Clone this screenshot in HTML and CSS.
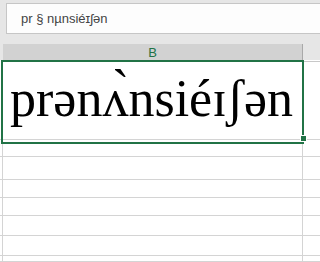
FILE: index.html
```html
<!DOCTYPE html>
<html>
<head>
    <meta charset="utf-8">
    <meta name="viewport" content="width=device-width, initial-scale=1.0">
    <title>pronunciation</title>
    <link rel="stylesheet" href="styles.css">
</head>
<body>
    <div class="formula-bar">
        <div class="formula-input">pr § nµnsiéɪʃən</div>
    </div>

    <div class="col-heads">
        <div class="corner"></div>
        <div class="col-head active">B</div>
        <div class="col-head rest"></div>
    </div>

    <div class="sheet">
        <div class="row r1">
            <div class="cell stub"></div>
            <div class="cell main selected">
                <span class="ipa">prənʌ̀nsiéɪʃən</span>
                <span class="handle"></span>
            </div>
            <div class="cell"></div>
        </div>
        <div class="row r2"><div class="cell stub"></div><div class="cell main"></div><div class="cell"></div></div>
        <div class="row r3"><div class="cell stub"></div><div class="cell main"></div><div class="cell"></div></div>
        <div class="row r4"><div class="cell stub"></div><div class="cell main"></div><div class="cell"></div></div>
        <div class="row r4"><div class="cell stub"></div><div class="cell main"></div><div class="cell"></div></div>
        <div class="row r6"><div class="cell stub"></div><div class="cell main"></div><div class="cell"></div></div>
        <div class="row r6"><div class="cell stub"></div><div class="cell main"></div><div class="cell"></div></div>
        <div class="row r8"><div class="cell stub"></div><div class="cell main"></div><div class="cell"></div></div>
    </div>
</body>
</html>
```

FILE: styles.css
```css
* {
    box-sizing: border-box;
}

body, html {
    margin: 0;
    width: 320px;
    height: 262px;
    overflow: hidden;
    background-color: #e6e6e6;
    font-family: "Liberation Sans", Arial, sans-serif;
}

.formula-bar {
    padding: 3px 0 0 6px;
    height: 44px;
}

.formula-input {
    height: 31px;
    background-color: #fdfdfd;
    border: 1px solid #c6c6c6;
    border-right: none;
    padding-left: 14px;
    display: flex;
    align-items: center;
    font-size: 13px;
    color: #444;
}

.col-heads {
    display: grid;
    grid-template-columns: 3px 300px 1fr;
    height: 16px;
}

.col-head.active {
    background-color: #d2d2d2;
    border-right: 1px solid #a9a9a9;
    color: #217346;
    font-size: 13px;
    text-align: center;
    line-height: 18px;
}

.col-head.rest {
    border-bottom: 1px solid #c8c8c8;
}

.sheet {
    height: 202px;
    overflow: hidden;
    background-color: #fff;
}

.row {
    display: grid;
    grid-template-columns: 3px 300px 1fr;
}

.cell {
    border-bottom: 1px solid #d4d4d4;
}

.cell.stub,
.cell.main {
    border-right: 1px solid #d4d4d4;
}

.r1 { height: 80px; }
.r2 { height: 17px; }
.r3 { height: 23px; }
.r4 { height: 18px; }
.r6 { height: 20px; }
.r8 { height: 6px; }

.selected {
    position: relative;
    display: flex;
    align-items: center;
    padding-left: 7px;
}

.selected::after {
    content: "";
    position: absolute;
    top: 0;
    left: -2px;
    right: -2px;
    height: 80px;
    border: 2px solid #217346;
}

.ipa {
    font-family: "Liberation Serif", "DejaVu Serif", serif;
    font-size: 52px;
    line-height: 1;
    color: #000;
    white-space: nowrap;
    margin-top: -2px;
}

.handle {
    position: absolute;
    left: 297px;
    top: 75px;
    width: 7px;
    height: 7px;
    background-color: #217346;
    border: 1px solid #fff;
    z-index: 2;
}
```
